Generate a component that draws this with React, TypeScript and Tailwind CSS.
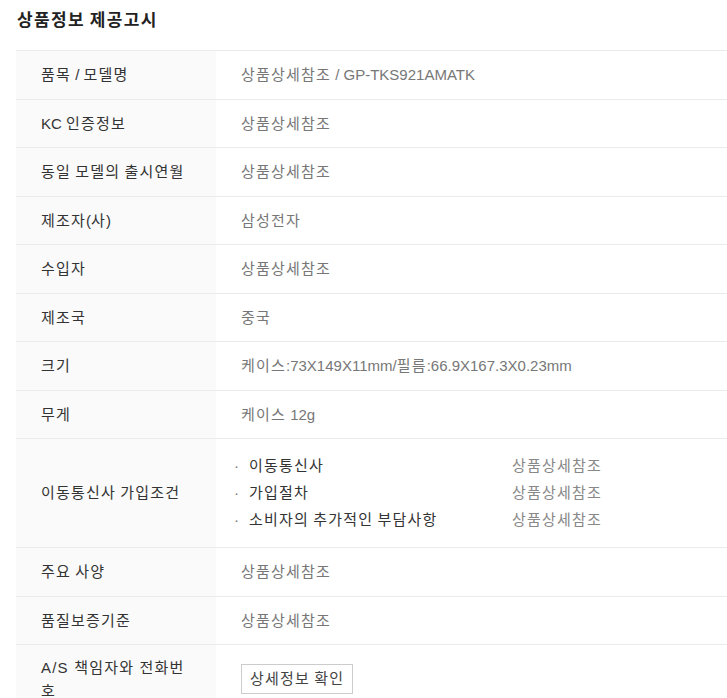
const font = { fontFamily: '"Liberation Sans", "Noto Sans CJK KR", sans-serif' };

type Row = { label: string; value?: string };

const rows: Row[] = [
  { label: "품목 / 모델명", value: "상품상세참조 / GP-TKS921AMATK" },
  { label: "KC 인증정보", value: "상품상세참조" },
  { label: "동일 모델의 출시연월", value: "상품상세참조" },
  { label: "제조자(사)", value: "삼성전자" },
  { label: "수입자", value: "상품상세참조" },
  { label: "제조국", value: "중국" },
  { label: "크기", value: "케이스:73X149X11mm/필름:66.9X167.3X0.23mm" },
  { label: "무게", value: "케이스 12g" },
];

const carrier = ["이동통신사", "가입절차", "소비자의 추가적인 부담사항"];

const after: Row[] = [
  { label: "주요 사양", value: "상품상세참조" },
  { label: "품질보증기준", value: "상품상세참조" },
];

function K({ t }: { t: string }) {
  const parts = t.split(/([\uac00-\ud7a3]+)/);
  return (
    <>
      {parts.map((p, i) =>
        /[\uac00-\ud7a3]/.test(p) ? (
          <span key={i} className="tracking-[0.08em]">
            {p}
          </span>
        ) : (
          p
        )
      )}
    </>
  );
}

function Line({ label, value }: Row) {
  return (
    <div className="flex border-b border-[#ebebeb] text-[15px]">
      <div className="w-[200px] shrink-0 bg-[#fafafa] px-[25px] py-[13px] leading-[21.5px] text-[#333]">
        <K t={label} />
      </div>
      <div className="flex-1 px-[25px] py-[13px] leading-[21.5px] text-[#777]">
        <K t={value || ""} />
      </div>
    </div>
  );
}

export default function App() {
  return (
    <div className="min-h-[698px] bg-white" style={font}>
      <h2 className="px-[17px] pt-[6px] pb-[15px] text-[17px] font-bold leading-[29px] text-[#222]">
        <K t="상품정보 제공고시" />
      </h2>
      <div className="ml-[16px] border-t border-[#ebebeb]">
        {rows.map((r) => (
          <Line key={r.label} {...r} />
        ))}
        <div className="flex border-b border-[#ebebeb] text-[15px]">
          <div className="flex w-[200px] shrink-0 items-center bg-[#fafafa] px-[25px] leading-[21.5px] text-[#333]">
            <p>
              <K t="이동통신사 가입조건" />
            </p>
          </div>
          <div className="flex-1 pt-[12.5px] pb-[14.5px] pl-[18px]">
            {carrier.map((c) => (
              <div key={c} className="flex leading-[27px]">
                <div className="flex w-[278px] shrink-0 text-[#333]">
                  <span className="w-[15px] text-[#777]">·</span>
                  <span>
                    <K t={c} />
                  </span>
                </div>
                <div className="text-[#888]">
                  <K t="상품상세참조" />
                </div>
              </div>
            ))}
          </div>
        </div>
        {after.map((r) => (
          <Line key={r.label} {...r} />
        ))}
        <div className="flex text-[15px]">
          <div className="w-[200px] shrink-0 bg-[#fafafa] px-[25px] pt-[11px] pb-[4px] leading-[23px] tracking-[0.08em] text-[#333]">
            A/S 책임자와 전화번호
          </div>
          <div className="flex-1 px-[25px] pt-[19px]">
            <button className="h-[30px] border border-[#ccc] bg-white px-[8px] text-[15px] text-[#444]">
              <K t="상세정보 확인" />
            </button>
          </div>
        </div>
      </div>
    </div>
  );
}
